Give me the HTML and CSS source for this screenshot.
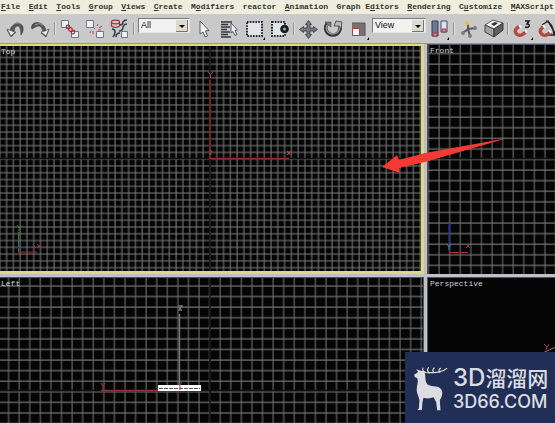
FILE: index.html
```html
<!DOCTYPE html>
<html lang="en">
<head>
<meta charset="utf-8">
<title>3ds Max viewports</title>
<link rel="stylesheet" href="styles.css">
</head>
<body>
<div class="app">
  <nav class="menu" aria-label="Main menu">
    <a href="#"><u>F</u>ile</a><a href="#"><u>E</u>dit</a><a href="#"><u>T</u>ools</a><a href="#"><u>G</u>roup</a><a href="#"><u>V</u>iews</a><a href="#"><u>C</u>reate</a><a href="#">M<u>o</u>difiers</a><a href="#">reactor</a><a href="#"><u>A</u>nimation</a><a href="#">Graph E<u>d</u>itors</a><a href="#"><u>R</u>endering</a><a href="#">C<u>u</u>stomize</a><a href="#"><u>M</u>AXScript</a>
  </nav>
  <div class="toolbar">
    <button class="tool" aria-label="Undo"><svg viewBox="0 0 25 28"><path d="M7 16C8 8 17 5 20 12q1 4-2 8 0-10-4-9-3 1-3 6l2 0-5 5-4-7z" fill="#55565a" stroke="#38393c" stroke-width=".6"/><path d="M4 14l4 7 4-4-3-1z" fill="#e8e8e8" stroke="#555" stroke-width=".7"/><path d="M9 11q4-5 8-2" stroke="#999" fill="none"/></svg></button>
    <button class="tool" aria-label="Redo"><svg viewBox="0 0 25 28"><path d="M18 16C17 8 8 5 4 10q-1 3 0 4 7-5 9-2 1 1 2 5l-2 1 5 4 3-8z" fill="#55565a" stroke="#38393c" stroke-width=".6"/><path d="M21 14l-3 7-5-4 4-1z" fill="#e8e8e8" stroke="#555" stroke-width=".7"/><path d="M7 10q5-3 8 0" stroke="#999" fill="none"/></svg></button>
    <span class="sep"></span>
    <button class="tool" aria-label="Select and link"><svg viewBox="0 0 25 28"><g fill="#eef1f5" stroke="#6d7889"><path d="M4.500 5.500h7v7h-7zM14.500 16.500h7v6h-7z"/></g><g fill="none" stroke="#b02c3b" stroke-width="1.200"><circle cx="11" cy="12" r="1.800"/><circle cx="13.500" cy="14.500" r="1.800"/><circle cx="16" cy="17" r="1.800"/></g></svg></button>
    <button class="tool" aria-label="Unlink selection"><svg viewBox="0 0 25 28"><g fill="#eef1f5" stroke="#6d7889"><path d="M4.500 5.500h7v7h-7zM14.500 16.500h7v6h-7z"/></g><path d="M11 12l2 2M15 11l1-2M17 13l3-2M16 15l3 0M9 16l-1 2M11 16l0 3" stroke="#b34c58" fill="none"/></svg></button>
    <button class="tool" aria-label="Bind to space warp"><svg viewBox="0 0 25 28"><path d="M13 10q3 0 3-3 1-2 4-2M12 16q4 0 4-4 1-3 4-3M5 14q3 0 3 3t-2 5M9 22q0-4 4-4" stroke="#34394b" stroke-width="1.500" fill="none"/><g fill="none" stroke="#b02c3b" stroke-width="1.200"><ellipse cx="8.500" cy="7" rx="4" ry="1.800"/><path d="M4.500 7v4q4 3 8 0V7"/></g><path d="M14.500 16.500h6v6h-6z" fill="#eef1f5" stroke="#6d7889"/></svg></button>
    <span class="sep"></span>
    <label class="combo filter"><select aria-label="Selection filter"><option>All</option></select><svg viewBox="0 0 12 12"><path d="M0 0h12v12H0z" fill="#ddd9ce"/><path d="M11.500 0v11.500H0" fill="none" stroke="#77756f"/><path d="M3 5h6L6 8z"/></svg></label>
    <button class="tool" aria-label="Select object"><svg viewBox="0 0 25 28"><path d="M8 6v13l3-2 2 5 2.500-1-2-5 3.500-.5z" fill="#eef0f3" stroke="#575d68"/></svg></button>
    <button class="tool" aria-label="Select by name"><svg viewBox="0 0 25 28"><path d="M4 7h11M4 9.500h7M4 12h9M4 14.500h6M4 17h9M4 19.500h7M4 22h10" stroke="#33363c" stroke-width="1.500"/><path d="M14 8v10l2-1.500 2 4 2-1-2-4 2.500-.5z" fill="#eef0f3" stroke="#575d68"/></svg></button>
    <button class="tool" aria-label="Rectangular selection region"><svg viewBox="0 0 25 28"><path d="M5 7h15v14H5z" fill="#e1e4e9" stroke="#222327" stroke-width="2" stroke-dasharray="1.600 1.200"/><path d="M23 22v3h-2z"/></svg></button>
    <button class="tool" aria-label="Window crossing"><svg viewBox="0 0 25 28"><path d="M5 7h13v14H5z" fill="#e1e4e9" stroke="#222327" stroke-width="2" stroke-dasharray="1.600 1.200"/><circle cx="17.500" cy="14" r="4.300" fill="#17191d"/><circle cx="17.500" cy="14" r="1.500" fill="#a4a9b0"/></svg></button>
    <span class="sep"></span>
    <button class="tool" aria-label="Select and move"><svg viewBox="0 0 25 28"><path d="M12.500 5.500l3 4H14v3.500h3.500v-1.500l4 3-4 3V16H14v3.500h1.500l-3 4-3-4H11V16H7.500v1.500l-4-3 4-3V13H11V9.500H9.500z" fill="#74777c" stroke="#34363b" stroke-width=".8"/></svg></button>
    <button class="tool" aria-label="Select and rotate"><svg viewBox="0 0 25 28"><path d="M7 8c-5 5-1 12 5 12s9-7 6-11" fill="none" stroke="#313338" stroke-width="3.600"/><path d="M7 9c-4 5 0 10 5 10 5 0 8-5 6-9" fill="none" stroke="#9b9da2" stroke-width="1.300"/><path d="M13 11l2-5 6 1-1 7-2-3z" fill="#b9babd" stroke="#3d3f44" stroke-width=".8"/><path d="M4 7h6v5z" fill="#777a80" stroke="#3d3f44" stroke-width=".6"/></svg></button>
    <button class="tool" aria-label="Select and scale"><svg viewBox="0 0 25 28"><path d="M6 8h13v13H6z" fill="#777074"/><path d="M6 8h13v13" fill="none" stroke="#555"/><path d="M6.500 13.500h7v7h-7z" fill="#fff" stroke="#b5384a"/><path d="M23 22v3h-2z"/></svg></button>
    <label class="combo coords"><select aria-label="Reference coordinate system"><option>View</option></select><svg viewBox="0 0 12 12"><path d="M0 0h12v12H0z" fill="#ddd9ce"/><path d="M11.500 0v11.500H0" fill="none" stroke="#77756f"/><path d="M3 5h6L6 8z"/></svg></label>
    <button class="tool" aria-label="Mirror"><svg viewBox="0 0 25 28"><path d="M5 6h6v15H5z" fill="#70778e" stroke="#343c5c"/><path d="M14 6h6v11h-6z" fill="#dfe2eb" stroke="#414a68"/><path d="M6 18h4v3H6zM15 14h4v3h-4z" fill="#d18d98" stroke="#a43648"/><path d="M22 22v3h-2z"/></svg></button>
    <span class="sep"></span>
    <button class="tool" aria-label="Select and manipulate"><svg viewBox="0 0 25 28"><path d="M12 8v6l7-1M12 14l-5 4M12 14l2 7" fill="none" stroke="#56595f" stroke-width="2"/><circle cx="11" cy="8" r="2.200" fill="#d9c94b"/><g fill="#7c7f85"><circle cx="19" cy="13" r="2"/><circle cx="7" cy="18" r="2"/><circle cx="14" cy="21" r="2"/></g></svg></button>
    <button class="tool" aria-label="Keyboard shortcut override"><svg viewBox="0 0 25 28"><path d="M4 10l8-5 10 3-9 6z" fill="#f2f2f2" stroke="#555"/><path d="M4 10l9 4v8l-9-5z" fill="#a0a2a6" stroke="#404246"/><path d="M13 14l9-6v7l-9 7z" fill="#5d5f63" stroke="#35373a"/><path d="M10 9l4-2 3 1-4 3z" fill="#333"/></svg></button>
    <span class="sep"></span>
    <button class="tool" aria-label="Snaps toggle, 3D"><svg viewBox="0 0 25 28"><path d="M10 11l-3 2c-5 4 2 10 6 6l3-2" fill="none" stroke="#b5493f" stroke-width="3.500"/><path d="M9 10l2 3M15 15l2 3" stroke="#f4f4f4" stroke-width="2"/><path d="M15 6h4l-2 3q3 0 2 2.500-1.500 1.500-4 .5" fill="none" stroke="#1c1d20" stroke-width="1.600"/><path d="M23 22v3h-2z"/></svg></button>
    <button class="tool" aria-label="Angle snap toggle"><svg viewBox="0 0 25 28"><path d="M7 10l6-4 8 14H7M11 6q7 2 8 14" fill="none" stroke="#222326" stroke-width="1.500"/><path d="M9 11l-2 2c-5 4 2 10 6 6l3-2" fill="none" stroke="#b5493f" stroke-width="3.500"/><path d="M8 10l2 3M14 15l2 3" stroke="#f4f4f4" stroke-width="2"/></svg></button>
  </div>
  <main class="views">
    <section class="view top active">
      <svg class="canvas" aria-hidden="true">
        <defs><pattern id="fine" x="3.600" y="1.800" width="6.780" height="6.780" patternUnits="userSpaceOnUse"><path d="M3 0v6.780M0 3h6.780" stroke="#7d7d7d"/></pattern></defs>
        <rect width="100%" height="100%" fill="url(#fine)"/>
        <path d="M210 0v230M0 112.500h425" stroke="#111" stroke-width="1.500"/>
        <path d="M210 34v78.500h79" fill="none" stroke="#8f2b2b" stroke-width="1.400"/>
        <path d="M208 26l2.500 3 2.500-3M210.500 29v3M287 105l4 4m0-4l-4 4M289 105v4M209 105h3l-3 3h3" fill="none" stroke="#a04444"/>
        <path d="M18.500 206v-20M17 179l2 3 2-3M19 182v3" fill="none" stroke="#2f8540"/>
        <path d="M18 206h19M37 198l4 4m0-4l-4 4" fill="none" stroke="#a52c33"/>
        <path d="M18 199h3l-3 3h3" fill="none" stroke="#29488e"/>
      </svg>
      <h2>Top</h2>
    </section>
    <section class="view front">
      <svg class="canvas" aria-hidden="true">
        <defs><pattern id="front" x="-2.500" y="5.600" width="10.590" height="10.590" patternUnits="userSpaceOnUse"><path d="M3 0v10.590M0 3h10.590" stroke="#747474"/></pattern></defs>
        <rect width="100%" height="100%" fill="url(#front)"/>
        <path d="M0 113.500h400" stroke="#111" stroke-width="1.500"/>
        <path d="M21 207v-27M20 179h3l-3 4h3" fill="none" stroke="#2525a5"/>
        <path d="M21 207.500h19M38 199l4 4m0-4l-4 4" fill="none" stroke="#a1303c"/>
        <path d="M19 199l2 3 2-3M21 202v3" fill="none" stroke="#388c8c"/>
      </svg>
      <h2>Front</h2>
    </section>
    <section class="view left">
      <svg class="canvas" aria-hidden="true">
        <defs><pattern id="left" x="5.600" y="5" width="10.580" height="10.580" patternUnits="userSpaceOnUse"><path d="M3 0v10.580M0 3h10.580" stroke="#747474"/></pattern></defs>
        <rect width="100%" height="100%" fill="url(#left)"/>
        <path d="M0 112.500h425M210 0v200" stroke="#111" stroke-width="1.500"/>
        <path d="M179.500 112V36M178 28h4l-3 4h3" fill="none" stroke="#777" stroke-width="1.400"/>
        <path d="M101 112.500h78M101 105l2 3 2-3M103 108v4" fill="none" stroke="#8f3434" stroke-width="1.300"/>
        <path d="M158 107h43v6h-43z" fill="#fff"/><path d="M159 110.500h41" stroke="#555" stroke-dasharray="4 1"/>
        <path d="M178 104l2 3 2-3M180 107v5" fill="none" stroke="#a03c3c"/>
      </svg>
      <h2>Left</h2>
    </section>
    <section class="view perspective">
      <svg class="canvas" aria-hidden="true"><path d="M112 76l16-7" stroke="#8b7770"/><path d="M116 66l3 3 2-3M119 69l-1 3" fill="none" stroke="#b03c48"/></svg>
      <h2>Perspective</h2>
    </section>
  </main>
  <svg class="arrow" viewBox="0 0 128 36" aria-hidden="true"><path d="M1 30L16 18l2 5 26-7L127 1 44 25l-26 6 1 5z" fill="#f33a35"/></svg>
  <aside class="brand">
    <svg class="deer" viewBox="40 75 105 138" aria-hidden="true"><path d="M42 104l12-8-6-8 14 4 10 2 3 10c1 14 1 23 8 30 16 7 33 2 40 14 5 8 4 17 0 25l-4 8 2 30h-10l-3-25-8-14c-12 5-22 3-30 1l-3 12-2 25h-13l4-5 2-24-5-17c-6-12-2-27 0-39 0-11-4-13-9-13z" fill="#dcdde0"/><path d="M67 95q8 4 18 3c20 0 40 0 55-13M75 97q-10-5-7-13M88 99q-10-8-3-16M101 98q-6-8 1-14M119 97q-6-7 2-12" fill="none" stroke="#dcdde0" stroke-width="3.500" stroke-linecap="round"/></svg>
    <div class="wordmark"><strong><b>3D</b>溜溜网</strong><span>3D66.COM</span></div>
  </aside>
</div>
</body>
</html>
```
FILE: styles.css
```css
* { box-sizing: border-box; }
body { margin: 0; background: #c5c6c9; font-family: "Liberation Sans", sans-serif; }
.app { position: relative; display: flex; flex-direction: column; min-height: 100vh; overflow: hidden; }
.menu { display: flex; justify-content: space-between; height: 14px; padding: 0 1px; background: #eeedde; white-space: nowrap; font: bold 8px/13px "Liberation Mono", monospace; }
.menu a { color: #34342f; text-decoration: none; }
.menu u { text-underline-offset: 1px; }
.toolbar { display: flex; align-items: flex-start; height: 29px; padding: 1px 0 0 3px; background: #c9c9ca; overflow: hidden; }
.tool { flex: none; width: 25px; height: 28px; padding: 0; border: 0; background: none; }
.tool svg { display: block; width: 25px; height: 28px; }
.sep { flex: none; width: 4px; height: 12px; margin-top: 8px; background: linear-gradient(90deg, transparent 1px, #929397 1px, #929397 2px, #e2e2e2 2px, #e2e2e2 3px, transparent 3px); }
.combo { flex: none; display: flex; align-items: center; height: 15px; margin-top: 3px; padding-right: 1px; border: 1px solid #777a80; border-right-color: #e5e5e5; border-bottom-color: #e5e5e5; background: #f2f2f1; }
.combo select { flex: 1; min-width: 0; height: 13px; padding: 0 0 0 2px; border: 0; appearance: none; background: none; color: #111; font: 9px/13px "Liberation Sans", sans-serif; }
.combo svg { width: 12px; height: 12px; }
.filter { width: 52px; margin-left: 2px; margin-right: 2px; }
.coords { width: 54px; margin-left: 1px; margin-right: 1px; }
.views { flex: 1; display: grid; grid-template-columns: 424fr 128fr; grid-template-rows: 230fr 146fr; gap: 3px; border-top: 1px solid #999a80; background: #bfc1c7; }
.view { position: relative; min-width: 0; overflow: hidden; background: #050505; border-right: 1px solid #50545e; border-top: 1px solid #50545e; }
.view h2 { position: relative; margin: 1px 0 0 1px; color: #d0d0d0; font: 8px/10px "Liberation Mono", monospace; }
.canvas { position: absolute; inset: 0; width: 100%; height: 100%; }
.active { border: solid #dcd983; border-width: 2px 3px 3px 0; }
.front, .perspective { border-left: 1px solid #50545e; border-right: 0; }
.front h2, .perspective h2 { margin-left: 2px; }
.arrow { position: absolute; left: 381px; top: 137px; width: 128px; height: 36px; }
.brand { position: absolute; right: 0; bottom: 0; display: flex; align-items: center; gap: 4px; width: 150px; height: 71px; padding-left: 8px; background: #212f57; color: #dcdde0; }
.deer { flex: none; width: 36px; height: 46px; }
.wordmark { display: flex; flex-direction: column; white-space: nowrap; }
.wordmark strong { font: 500 21px/28px "Noto Sans CJK SC", sans-serif; }
.wordmark b { font: 500 24px/28px Inter, sans-serif; }
.wordmark span { font: 500 18px/20px Inter, sans-serif; }
```
